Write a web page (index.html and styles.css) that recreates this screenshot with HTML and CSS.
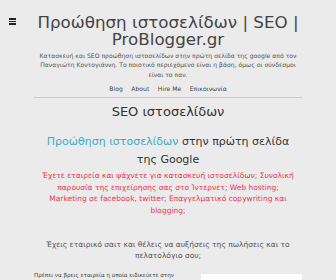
FILE: index.html
```html
<!DOCTYPE html>
<html lang="el">
<head>
<meta charset="utf-8">
<link rel="stylesheet" href="styles.css">
</head>
<body>
<div class="menu-toggle" aria-label="menu">
  <span></span><span></span><span></span>
</div>
<div class="page">
  <header class="head">
    <h1 class="title">Προώθηση ιστοσελίδων | SEO | ProBlogger.gr</h1>
    <p class="desc">Κατασκευή και SEO προώθηση ιστοσελίδων στην πρώτη σελίδα της google από τον<br>Παναγιώτη Κοντογιάννη. Το ποιοτικό περιεχόμενο είναι η βάση, όμως οι σύνδεσμοι<br>είναι το παν.</p>
    <nav class="nav">
      <a>Blog</a><a>About</a><a>Hire Me</a><a>Επικοινωνία</a>
    </nav>
  </header>
  <main class="main">
    <h2 class="page-title">SEO ιστοσελίδων</h2>
    <h3 class="lead"><span class="hl">Προώθηση ιστοσελίδων</span> στην πρώτη σελίδα<br>της Google</h3>
    <p class="red">Έχετε εταιρεία και ψάχνετε για κατασκευή ιστοσελίδων; Συνολική<br>παρουσία της επιχείρησης σας στο Ίντερνετ; Web hosting;<br>Marketing σε facebook, twitter; Επαγγελματικό copywriting και<br>blogging;</p>
    <p class="ask">Έχεις εταιρικό σαιτ και θέλεις να αυξήσεις της πωλήσεις και το<br>πελατολόγιο σου;</p>
    <div class="row">
      <p class="small">Πρέπει να βρεις εταιρεία η οποία ειδικεύετε στην κατασκευή και προώθηση ιστοσελίδων.</p>
      <div class="box"></div>
    </div>
  </main>
</div>
</body>
</html>
```
FILE: styles.css
```css
html, body {
  margin: 0;
  padding: 0;
  background: #ebebeb;
}
body {
  font-family: "DejaVu Sans", sans-serif;
  color: #444;
  position: relative;
  height: 280px;
  overflow: hidden;
}
.menu-toggle {
  position: absolute;
  left: 9px;
  top: 18px;
  width: 7px;
  display: flex;
  flex-direction: column;
  gap: 1px;
}
.menu-toggle span {
  display: block;
  height: 1.5px;
  background: #222;
}
.page {
  width: 268px;
  margin: 0 auto;
  padding-top: 14px;
}
.head {
  text-align: center;
}
.title {
  margin: 0;
  font-weight: normal;
  font-size: 16.7px;
  line-height: 16.5px;
  color: #444;
}
.desc {
  margin: 4px -6px 0;
  font-size: 6.1px;
  line-height: 9.3px;
  color: #555;
  white-space: nowrap;
}
.nav {
  display: flex;
  justify-content: center;
  gap: 8.5px;
  font-size: 6.1px;
  line-height: 7px;
  color: #444;
  padding: 6px 0 5px;
  border-bottom: 1px solid #a9d7da;
}
.main {
  text-align: center;
}
.page-title {
  margin: 7px 0 0;
  font-weight: normal;
  font-size: 13px;
  line-height: 14px;
  color: #333;
}
.lead {
  margin: 14px 0 0;
  font-weight: normal;
  font-size: 11px;
  line-height: 18px;
  color: #333;
}
.hl {
  color: #3aaec6;
}
.red {
  margin: 1px 0 0;
  font-size: 7.5px;
  line-height: 11.7px;
  color: #e8364f;
}
.ask {
  margin: 22px 0 0;
  font-size: 7.5px;
  line-height: 11.7px;
  color: #555;
}
.row {
  display: flex;
  align-items: flex-start;
  gap: 15px;
  margin-top: 7px;
}
.small {
  margin: 0;
  width: 152px;
  text-align: left;
  font-size: 5.6px;
  line-height: 12px;
  color: #444;
}
.box {
  flex: 1;
  height: 30px;
  background: #fff;
  margin-top: 5px;
}
```
